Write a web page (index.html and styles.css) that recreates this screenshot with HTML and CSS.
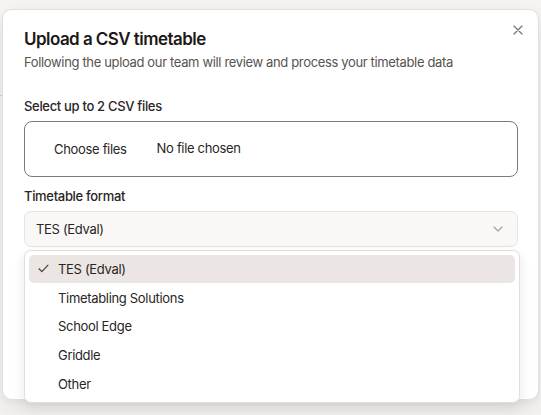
FILE: index.html
```html
<!DOCTYPE html>
<html lang="en">
<head>
<meta charset="utf-8">
<title>Upload a CSV timetable</title>
<link rel="stylesheet" href="styles.css">
</head>
<body>
<div class="backdrop-line"></div>
<div class="dialog">
  <button class="close" aria-label="Close">
    <svg width="10" height="10" viewBox="0 0 10 10"><path d="M1 1L9 9M9 1L1 9" stroke="currentColor" stroke-width="1.2" stroke-linecap="round"/></svg>
  </button>
  <h2 class="title">Upload a CSV timetable</h2>
  <p class="subtitle">Following the upload our team will review and process your timetable data</p>

  <div class="field">
    <label class="label">Select up to 2 CSV files</label>
    <div class="file-box">
      <span class="file-btn">Choose files</span>
      <span class="file-name">No file chosen</span>
    </div>
  </div>

  <div class="field select-field">
    <label class="label">Timetable format</label>
    <div class="select">
      <span>TES (Edval)</span>
      <svg class="chevron" width="10" height="6" viewBox="0 0 10 6"><path d="M1 1L5 5L9 1" fill="none" stroke="currentColor" stroke-width="1.2" stroke-linecap="round" stroke-linejoin="round"/></svg>
    </div>
    <ul class="menu">
      <li class="item active">
        <svg class="check" width="11" height="9" viewBox="0 0 11 9"><path d="M1 4.8L3.9 7.6L10 1.2" fill="none" stroke="currentColor" stroke-width="1.2" stroke-linecap="round" stroke-linejoin="round"/></svg>
        TES (Edval)
      </li>
      <li class="item">Timetabling Solutions</li>
      <li class="item">School Edge</li>
      <li class="item">Griddle</li>
      <li class="item">Other</li>
    </ul>
  </div>
</div>
</body>
</html>
```

FILE: styles.css
```css
* { box-sizing: border-box; }
html, body { margin: 0; padding: 0; }
body {
  width: 541px;
  height: 415px;
  overflow: hidden;
  background: #f6f5f4;
  font-family: Inter, "Noto Sans", sans-serif;
  letter-spacing: -0.32px;
  color: #1c1917;
  position: relative;
}
.backdrop-line {
  position: absolute;
  left: 0;
  top: 95px;
  width: 3px;
  height: 1px;
  background: #d6d3d1;
}
.dialog {
  position: relative;
  margin: 9px 0 0 2px;
  width: 537px;
  height: 391px;
  background: #fff;
  border: 1px solid #e2dfdd;
  border-radius: 10px;
  box-shadow: 0 10px 28px rgba(60, 40, 30, 0.10), 0 2px 6px rgba(0,0,0,0.04);
  padding: 17px 20px 0 21px;
}
.close {
  position: absolute;
  top: 14px;
  right: 14px;
  width: 12px;
  height: 12px;
  padding: 0;
  border: 0;
  background: none;
  color: #78716c;
  display: flex;
  align-items: center;
  justify-content: center;
}
.title {
  margin: 0;
  font-size: 17px;
  line-height: 24px;
  font-weight: 600;
  letter-spacing: -0.55px;
  color: #1c1917;
}
.subtitle {
  margin: 1px 0 0;
  font-size: 13px;
  line-height: 20px;
  letter-spacing: -0.35px;
  color: #57534e;
}
.field { margin-top: 24px; }
.field + .field { margin-top: 9px; }
.label {
  display: block;
  font-size: 13px;
  line-height: 20px;
  font-weight: 500;
  color: #292524;
  margin-bottom: 5px;
}
.file-box {
  height: 56px;
  border: 1px solid #7d7a78;
  border-radius: 8px;
  display: flex;
  align-items: center;
  padding-left: 29px;
  font-size: 13px;
  color: #292524;
}
.file-btn { margin-right: 30px; margin-top: -1px; }
.file-name { margin-top: -3px; }
.select-field { position: relative; }
.select {
  height: 36px;
  background: #faf8f6;
  border: 1px solid #e7e3e0;
  border-radius: 7px;
  display: flex;
  align-items: center;
  justify-content: space-between;
  padding: 0 14px 0 11px;
  font-size: 13px;
  color: #292524;
}
.chevron { color: #a8a29e; }
.menu {
  position: absolute;
  left: 0;
  top: 64px;
  width: 496px;
  margin: 0;
  padding: 4px;
  list-style: none;
  background: #fff;
  border: 1px solid #e2dedb;
  border-radius: 7px;
  box-shadow: 0 4px 12px rgba(40, 30, 20, 0.10);
}
.item {
  position: relative;
  height: 28.6px;
  display: flex;
  align-items: center;
  padding-left: 29px;
  font-size: 13px;
  color: #292524;
  border-radius: 5px;
}
.item.active { background: #ebe6e3; height: 27.5px; margin-bottom: 1px; }
.check {
  position: absolute;
  left: 9px;
  top: 9px;
  color: #44403c;
}
```
